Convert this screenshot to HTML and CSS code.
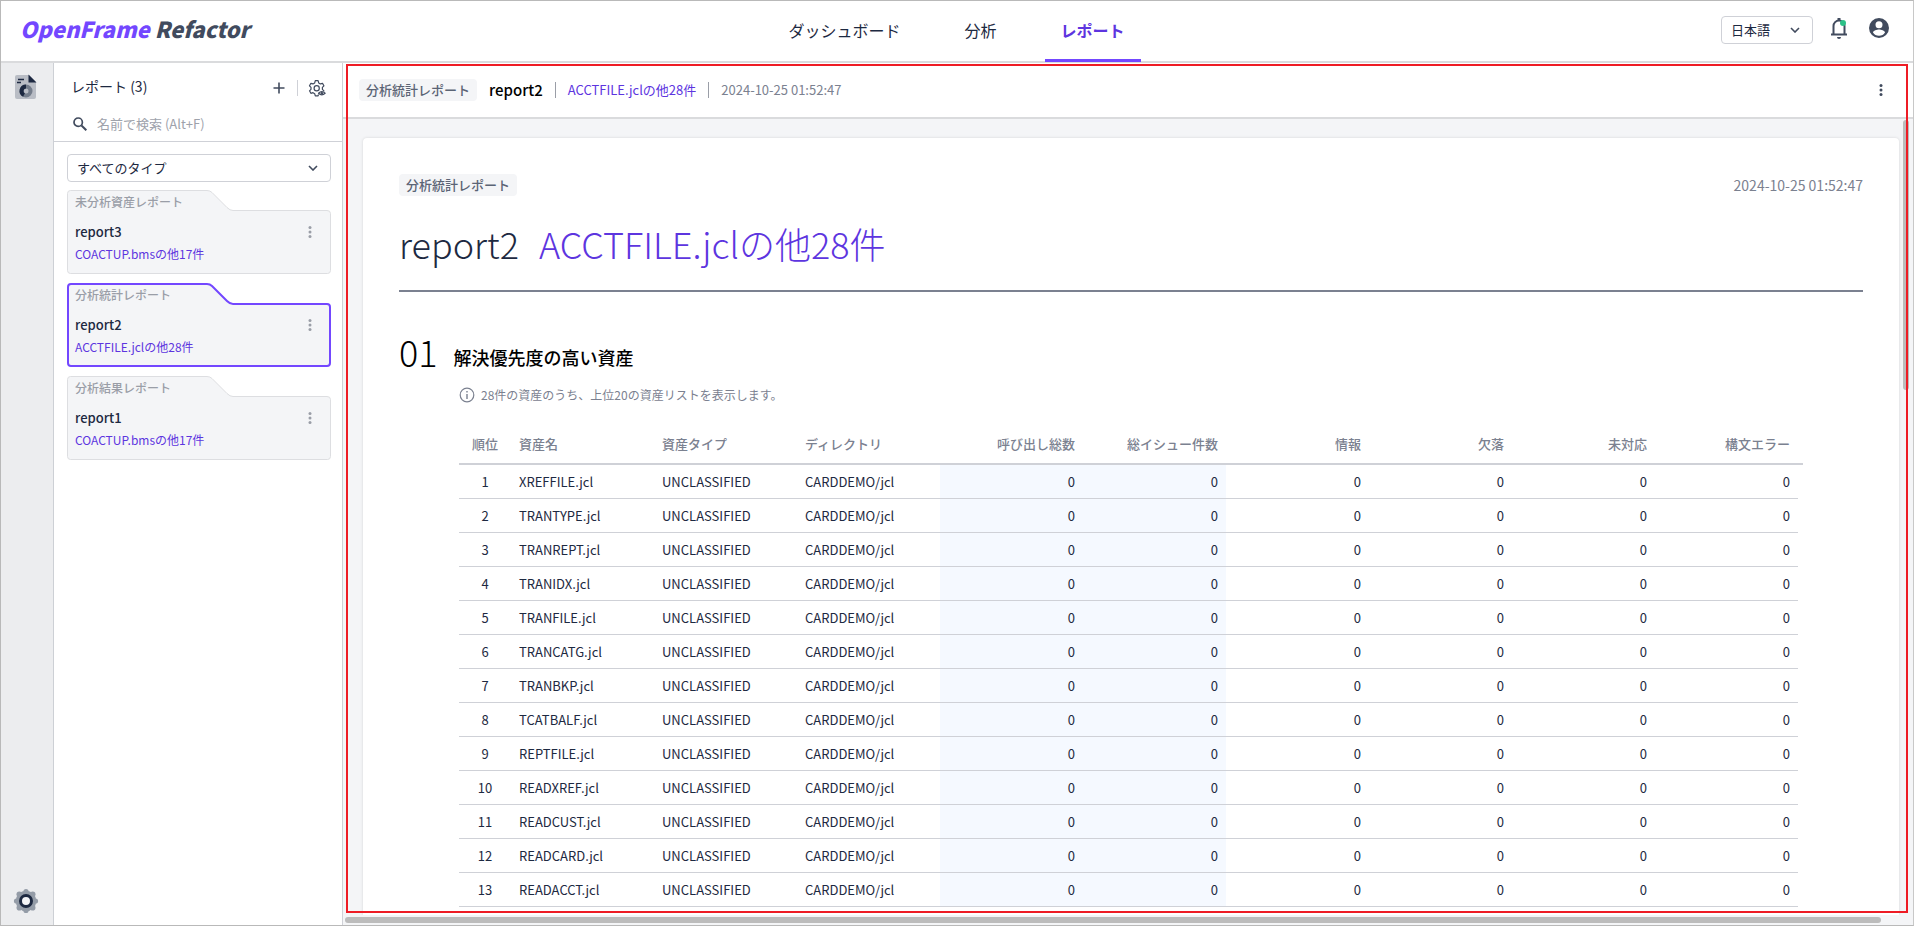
FILE: index.html
```html
<!DOCTYPE html>
<html lang="ja">
<head>
<meta charset="utf-8">
<title>OpenFrame Refactor</title>
<link rel="stylesheet" href="styles.css">
</head>
<body>
<div class="app">
  <header class="topbar">
    <a class="logo" href="#"><span class="logo-accent">OpenFrame</span> Refactor</a>
    <nav class="nav">
      <a href="#">ダッシュボード</a>
      <a href="#">分析</a>
      <a href="#" class="current">レポート</a>
    </nav>
    <div class="tools">
      <select class="select lang" aria-label="言語"><option>日本語</option></select>
      <button class="icon-btn" aria-label="通知">
        <svg width="20" height="24" viewBox="0 0 20 24"><path d="M4.500 18.500V10a5.500 5.500 0 0 1 11 0v8.500M2 18.500h16" fill="none" stroke="#414b5e" stroke-width="2"/><path d="M10 2v3" stroke="#414b5e" stroke-width="3"/><path d="M8 21h4a2 2 0 0 1-4 0z" fill="#414b5e"/><circle cx="14" cy="7" r="3" fill="#2cc188"/></svg>
      </button>
      <button class="icon-btn user" aria-label="ユーザー">
        <svg width="24" height="24" viewBox="0 0 24 24"><path fill="#414b5e" fill-rule="evenodd" d="M12 2a10 10 0 1 0 0 20 10 10 0 0 0 0-20zm0 3.200a3.500 3.500 0 1 1 0 7 3.500 3.500 0 0 1 0-7zm0 14.600a7 7 0 0 1-6-3.300c.1-2 4-3 6-3s5.900 1 6 3a7 7 0 0 1-6 3.300z"/></svg>
      </button>
    </div>
  </header>
  <div class="body">
    <aside class="rail">
      <button class="icon-btn" aria-label="レポート">
        <svg width="24" height="26" viewBox="0 0 24 26"><path d="M3 1h12l7 7v15a2 2 0 0 1-2 2H3a2 2 0 0 1-2-2V3a2 2 0 0 1 2-2z" fill="#b9bdc5"/><path d="M14.500 0.500L22.500 8.500h-8z" fill="#1d2941"/><path d="M4 5.500h6M3 8.500h4" stroke="#1d2941" stroke-width="1.500"/><circle cx="12" cy="17" r="4.500" fill="none" stroke="#747d8b" stroke-width="4"/><path d="M12 12.500a4.500 4.500 0 0 0-2 8.500" fill="none" stroke="#1d2941" stroke-width="4"/></svg>
      </button>
      <button class="icon-btn" aria-label="設定">
        <svg width="26" height="26" viewBox="0 0 26 26"><g fill="#949ca7"><circle cx="13" cy="13" r="10.300"/><circle cx="13" cy="3.500" r="2.600"/><circle cx="13" cy="22.500" r="2.600"/><circle cx="3.500" cy="13" r="2.600"/><circle cx="22.500" cy="13" r="2.600"/><circle cx="6.300" cy="6.300" r="2.800"/><circle cx="19.700" cy="6.300" r="2.800"/><circle cx="6.300" cy="19.700" r="2.800"/><circle cx="19.700" cy="19.700" r="2.800"/></g><circle cx="13" cy="13" r="5.500" fill="#f4f5f7" stroke="#1d2941" stroke-width="3"/></svg>
      </button>
    </aside>
    <section class="side">
      <div class="side-head">
        <h2>レポート (3)</h2>
        <button class="icon-btn" aria-label="追加"><svg width="12" height="12" viewBox="0 0 12 12"><path d="M6 0.500v11M0.500 6h11" stroke="#414b5e" stroke-width="1.600"/></svg></button>
        <span class="rule"></span>
        <button class="icon-btn" aria-label="表示設定">
          <svg width="18" height="18" viewBox="0 0 18 18" fill="none" stroke="#414b5e" stroke-width="1.200" stroke-linejoin="round"><path d="M10.500 15.500l-.4 1.300H7.300l-.6-2.100-1.700-1-2.100.6-1.400-2.500 1.500-1.500v-2L1.500 6.800l1.400-2.500 2.100.6 1.700-1 .6-2.200h2.800l.6 2.200 1.700 1 2.100-.6 1.400 2.500-1.500 1.500v2l1.500 1.500-.3.600"/><circle cx="8.700" cy="9.200" r="2.600"/><path d="M10.500 14.300q3.300-3.200 6.600 0-3.300 3.200-6.600 0z" fill="#fff"/><circle cx="13.800" cy="14.300" r=".7"/></svg>
        </button>
      </div>
      <label class="search">
        <svg width="14" height="14" viewBox="0 0 14 14" fill="none" stroke="#414b5e"><circle cx="5.200" cy="5.200" r="4.200" stroke-width="1.700"/><path d="M8.500 8.500l4.800 4.800" stroke-width="2"/></svg>
        <input type="search" placeholder="名前で検索 (Alt+F)" aria-label="名前で検索">
      </label>
      <div class="side-list">
        <select class="select" aria-label="タイプ"><option>すべてのタイプ</option></select>
        <div class="cards">
        <article class="card">
          <svg class="card-shape" width="264" height="84" viewBox="0 0 264 84"><path d="M3.500 .5H140q3 0 5 2l15 15q3 3 6 3h94q3.500 0 3.500 3v57q0 3-3 3H3.500q-3 0-3-3v-77q0-3 3-3z"/></svg>
          <p class="card-type">未分析資産レポート</p>
          <div class="card-row"><h3>report3</h3><button class="icon-btn" aria-label="メニュー"><svg class="dots" width="4" height="12" viewBox="0 0 4 12"><circle cx="2" cy="1.500" r="1.500"/><circle cx="2" cy="6" r="1.500"/><circle cx="2" cy="10.500" r="1.500"/></svg></button></div>
          <p class="card-asset">COACTUP.bmsの他17件</p>
        </article>
        <article class="card selected">
          <svg class="card-shape" width="264" height="84" viewBox="0 0 264 84"><path d="M4 1H140q3 0 5 2l15 15q3 3 6 3h94q3 0 3 3v56q0 3-3 3H4q-3 0-3-3V4q0-3 3-3z"/></svg>
          <p class="card-type">分析統計レポート</p>
          <div class="card-row"><h3>report2</h3><button class="icon-btn" aria-label="メニュー"><svg class="dots" width="4" height="12" viewBox="0 0 4 12"><circle cx="2" cy="1.500" r="1.500"/><circle cx="2" cy="6" r="1.500"/><circle cx="2" cy="10.500" r="1.500"/></svg></button></div>
          <p class="card-asset">ACCTFILE.jclの他28件</p>
        </article>
        <article class="card">
          <svg class="card-shape" width="264" height="84" viewBox="0 0 264 84"><path d="M3.500 .5H140q3 0 5 2l15 15q3 3 6 3h94q3.500 0 3.500 3v57q0 3-3 3H3.500q-3 0-3-3v-77q0-3 3-3z"/></svg>
          <p class="card-type">分析結果レポート</p>
          <div class="card-row"><h3>report1</h3><button class="icon-btn" aria-label="メニュー"><svg class="dots" width="4" height="12" viewBox="0 0 4 12"><circle cx="2" cy="1.500" r="1.500"/><circle cx="2" cy="6" r="1.500"/><circle cx="2" cy="10.500" r="1.500"/></svg></button></div>
          <p class="card-asset">COACTUP.bmsの他17件</p>
        </article>
        </div>
      </div>
    </section>
    <main class="main">
      <div class="crumb">
        <span class="tag">分析統計レポート</span>
        <strong>report2</strong>
        <span class="rule"></span>
        <span class="accent">ACCTFILE.jclの他28件</span>
        <span class="rule"></span>
        <time>2024-10-25 01:52:47</time>
        <button class="icon-btn more" aria-label="メニュー"><svg class="dots dark" width="4" height="12" viewBox="0 0 4 12"><circle cx="2" cy="1.500" r="1.500"/><circle cx="2" cy="6" r="1.500"/><circle cx="2" cy="10.500" r="1.500"/></svg></button>
      </div>
      <div class="scroller">
        <div class="paper">
          <div class="paper-meta"><span class="tag">分析統計レポート</span><time>2024-10-25 01:52:47</time></div>
          <h1>report2 <span class="accent">ACCTFILE.jclの他28件</span></h1>
          <h2 class="section-title"><span class="num">01</span><span>解決優先度の高い資産</span></h2>
          <div class="section-body">
            <p class="note"><svg width="16" height="16" viewBox="0 0 16 16"><circle cx="8" cy="8" r="6.800" fill="none" stroke="#7b8190" stroke-width="1.200"/><path d="M8 7v5M8 4v1.600" stroke="#7b8190" stroke-width="1.400"/></svg>28件の資産のうち、上位20の資産リストを表示します。</p>
            <table class="grid">
              <thead><tr><th class="rank">順位</th><th>資産名</th><th>資産タイプ</th><th>ディレクトリ</th><th class="n">呼び出し総数</th><th class="n">総イシュー件数</th><th class="n">情報</th><th class="n">欠落</th><th class="n">未対応</th><th class="n">構文エラー</th><th class="gutter"></th></tr></thead>
              <tbody id="rows"></tbody>
            </table>
          </div>
        </div>
        <div class="vbar"><div class="vthumb"></div></div>
      </div>
      <div class="hbar"><div class="hthumb"></div></div>
      <div class="highlight"></div>
    </main>
  </div>
</div>
<script src="script.js"></script>
</body>
</html>
```
FILE: script.js
```js
const names = ["XREFFILE", "TRANTYPE", "TRANREPT", "TRANIDX", "TRANFILE", "TRANCATG", "TRANBKP", "TCATBALF", "REPTFILE", "READXREF", "READCUST", "READCARD", "READACCT"];
document.getElementById("rows").innerHTML = names.map((name, i) =>
  `<tr><td class="rank">${i + 1}</td><td>${name}.jcl</td><td>UNCLASSIFIED</td><td>CARDDEMO/jcl</td>` +
  `<td class="n tint">0</td><td class="n tint">0</td>` + `<td class="n">0</td>`.repeat(4) + `</tr>`
).join("");
```
FILE: styles.css
```css
* { box-sizing: border-box; margin: 0; padding: 0; }
body { font-family: "Noto Sans CJK JP", "Noto Sans", sans-serif; font-size: 13px; line-height: 20px; color: #1d2941; }
a { color: inherit; text-decoration: none; }
.app { height: 100vh; display: flex; flex-direction: column; border: 1px solid #b9b9b9; border-right-color: #c8c8c8; background: #fff; overflow: hidden; }
.icon-btn { border: 0; background: none; display: flex; align-items: center; justify-content: center; }

.topbar { flex: none; height: 62px; padding: 0 20px 0 19px; display: grid; grid-template-columns: 1fr auto 1fr; border-bottom: 2px solid #dadbdd; }
.logo { padding-top: 13px; font-size: 22px; line-height: 28px; font-weight: 900; font-style: italic; color: #414b5e; }
.logo-accent { color: #7347ff; }
.nav { display: flex; gap: 32px; font-size: 16px; }
.nav a { padding: 19px 16px 0; line-height: 20px; }
.nav .current { color: #5d35df; font-weight: 700; border-bottom: 3px solid #7347ff; margin-bottom: -1px; }
.tools { display: flex; justify-content: flex-end; gap: 16px; padding-top: 15px; }
.tools .icon-btn { height: 24px; }
.tools .user { width: 28px; }
.select { height: 28px; width: 100%; padding: 0 9px; border: 1px solid #cfd1d7; border-radius: 4px; font: inherit; color: inherit; appearance: none; background: #fff url("data:image/svg+xml,%3Csvg xmlns='http://www.w3.org/2000/svg' width='10' height='6'%3E%3Cpath d='M1 1l4 4 4-4' fill='none' stroke='%23414b5e' stroke-width='1.600'/%3E%3C/svg%3E") no-repeat right 12px center; }
.lang { width: 92px; }

.body { flex: 1; min-height: 0; display: flex; }
.rail { width: 53px; flex: none; background: #ecedef; border-right: 1px solid #cdd0d5; padding: 11px 2px 11px 0; display: flex; flex-direction: column; align-items: center; justify-content: space-between; }
.side { width: 289px; flex: none; border-right: 1px solid #cfd1d7; }
.side-head { display: flex; align-items: center; height: 37px; padding: 13px 16px 0 17px; }
.side-head h2 { flex: 1; align-self: flex-start; font-size: 14px; line-height: 20px; font-weight: 400; }
.rule { width: 1px; height: 16px; background: #9a9ea7; }
.side-head .rule { margin: 0 10px 0 12px; background: #cfd1d7; }
.search { display: flex; align-items: center; gap: 10px; height: 42px; padding: 7px 19px 0; border-bottom: 1px solid #cfd1d7; }
.search input { border: 0; outline: 0; flex: 1; min-width: 0; font: inherit; }
.search input::placeholder { color: #9ea2ab; opacity: 1; }
.side-list { padding: 12px 11px 0 13px; display: grid; gap: 8px; }
.cards { display: grid; gap: 9px; }
.card { position: relative; height: 84px; padding: 3px 8px 0; }
.card > * { position: relative; }
.card .card-shape { position: absolute; left: 0; top: 0; fill: #f4f5f7; stroke: #dddee1; }
.selected .card-shape { stroke: #7347ff; stroke-width: 2; }
.card-type { font-size: 12px; line-height: 18px; font-weight: 500; color: #9a9ea7; }
.card-row { display: flex; justify-content: space-between; padding: 11px 11px 0 0; }
.card-row h3 { font-size: 13px; line-height: 20px; font-weight: 500; }
.card-asset { font-size: 12px; line-height: 20px; margin-top: 2px; color: #5d35df; }
.dots { fill: #9a9ea7; }
.dots.dark { fill: #414b5e; }

.main { flex: 1; min-width: 0; position: relative; display: flex; flex-direction: column; background: #f4f5f7; }
.crumb { flex: none; height: 56px; padding: 0 30px 0 16px; display: flex; align-items: center; gap: 12px; background: #fff; border-bottom: 2px solid #dadbdd; }
.crumb strong { font-size: 15px; font-weight: 500; color: #000; }
.more { margin-left: auto; }
.tag { padding: 1px 7px; border-radius: 4px; background: #f4f5f7; font-weight: 500; color: #5b6475; }
.accent { color: #5d35df; }
time { color: #7b8190; }
.scroller { flex: 1; min-height: 0; display: flex; overflow: hidden; padding: 19px 0 0 20px; }
.paper { flex: 1; min-width: 0; padding: 36px 36px 0; background: #fff; border-radius: 4px 4px 0 0; box-shadow: 0 0 3px #0002; overflow: hidden; }
.paper-meta { display: flex; justify-content: space-between; align-items: center; }
.paper-meta time { font-size: 14px; }
h1 { font-size: 36px; line-height: 52px; font-weight: 300; padding: 21px 0; border-bottom: 2px solid #7b8190; }
h1 .accent { margin-left: 12px; }
.section-title { display: flex; align-items: flex-end; gap: 16px; margin-top: 35px; font-size: 18px; line-height: 36px; font-weight: 500; color: #000; }
.num { font-size: 36px; line-height: 48px; font-weight: 300; }
.section-body { padding: 10px 60px 0; }
.note { display: flex; gap: 6px; align-items: center; font-size: 12px; color: #7b8190; }
.grid { width: 100%; table-layout: fixed; border-collapse: collapse; margin-top: 20px; }
.grid th { height: 39px; padding: 0 8px; text-align: left; font-weight: 500; color: #7b8190; border-bottom: 2px solid #cfd1d7; }
.grid td { height: 34px; padding: 2px 8px 0; border-bottom: 1px solid #cfd1d7; }
.grid .rank { width: 52px; text-align: center; }
.grid .n { text-align: right; }
.grid .gutter { width: 5px; padding: 0; }
.tint { background: #f5f9ff; }
.vbar { width: 14px; margin-top: -18px; flex: none; padding: 0 4px; }
.vthumb { width: 6px; height: 270px; border-radius: 3px; background: #bcbcbc; }
.hbar { height: 10px; padding: 2px 32px 0 2px; }
.hthumb { height: 6px; border-radius: 3px; background: #bcbcbc; }
.highlight { position: absolute; left: 3px; top: 1px; right: 5px; bottom: 12px; border: 2px solid #ee1c25; pointer-events: none; }
```
